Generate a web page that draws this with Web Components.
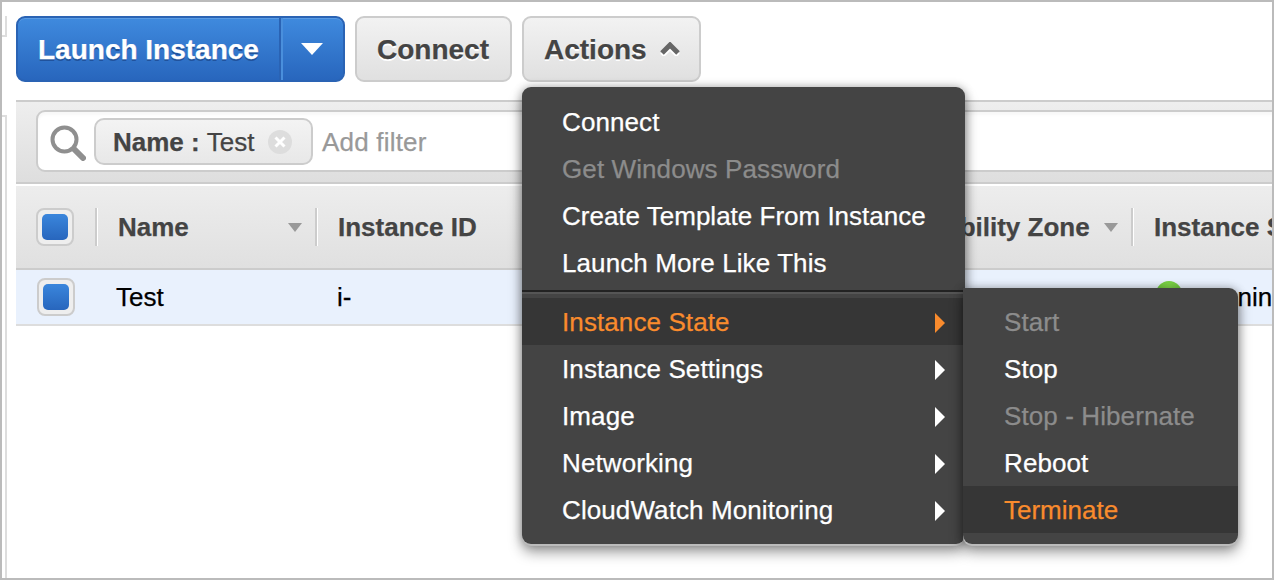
<!DOCTYPE html>
<html>
<head>
<meta charset="utf-8">
<title>Instances</title>
<style>
    html, body { margin: 0; padding: 0; background: #fff; }
    body { font-family: "Liberation Sans", Arial, sans-serif; }
</style>
</head>
<body>
<ec2-console>
    <ec2-toolbar>
        <launch-button>Launch Instance</launch-button>
        <gray-button style="width: 157px">Connect</gray-button>
        <actions-menu>
            <gray-button open style="width: 179px">Actions</gray-button>
            <dark-menu slot="menu" style="--menu-w: 443px">
                <menu-item>Connect</menu-item>
                <menu-item disabled>Get Windows Password</menu-item>
                <menu-item style="letter-spacing: 0">Create Template From Instance</menu-item>
                <menu-item>Launch More Like This</menu-item>
                <menu-divider></menu-divider>
                <menu-item active arrow>Instance State
                    <dark-menu slot="sub" style="--menu-w: 275px; --pad-l: 41px">
                        <menu-item disabled>Start</menu-item>
                        <menu-item>Stop</menu-item>
                        <menu-item disabled>Stop - Hibernate</menu-item>
                        <menu-item>Reboot</menu-item>
                        <menu-item active style="letter-spacing: 0">Terminate</menu-item>
                    </dark-menu>
                </menu-item>
                <menu-item arrow>Instance Settings</menu-item>
                <menu-item arrow>Image</menu-item>
                <menu-item arrow>Networking</menu-item>
                <menu-item arrow>CloudWatch Monitoring</menu-item>
            </dark-menu>
        </actions-menu>
    </ec2-toolbar>
    <filter-bar>
        <filter-chip>Test</filter-chip>
    </filter-bar>
    <instance-table></instance-table>
</ec2-console>

<script>
// shell with the grey screenshot frame
class Ec2Console extends HTMLElement {
    constructor() {
        super();
        this.attachShadow({mode: 'open'}).innerHTML = `
            <style>
                :host {
                    display: block;
                    box-sizing: border-box;
                    width: 1274px;
                    height: 580px;
                    border: 2px solid #bbb;
                    padding-left: 14px;
                    overflow: hidden;
                    color: #444;
                    font-family: "Liberation Sans", Arial, sans-serif;
                    font-size: 26px;
                    -webkit-text-stroke: .25px;
                    /* bits of the page behind, left of the content */
                    background:
                        linear-gradient(#ddd, #ddd) 3px 14px / 2px 20px no-repeat,
                        linear-gradient(#ddd, #ddd) 0 33px / 5px 2px no-repeat,
                        linear-gradient(#ddd, #ddd) 0 113px / 5px 2px no-repeat,
                        linear-gradient(#ddd, #ddd) 3px 113px / 2px 463px no-repeat,
                        #fff;
                }
            </style>
            <slot></slot>`;
    }
}

class Ec2Toolbar extends HTMLElement {
    constructor() {
        super();
        this.attachShadow({mode: 'open'}).innerHTML = `
            <style>
                :host {
                    display: flex;
                    gap: 10px;
                    padding-top: 14px;
                    height: 98px;
                    box-sizing: border-box;
                    position: relative;
                    z-index: 5;
                }
            </style>
            <slot></slot>`;
    }
}

class LaunchButton extends HTMLElement {
    constructor() {
        super();
        this.attachShadow({mode: 'open'}).innerHTML = `
            <style>
                :host {
                    display: flex;
                    box-sizing: border-box;
                    width: 329px;
                    height: 66px;
                    border: 2px solid #2a63b4;
                    border-radius: 9px;
                    background: linear-gradient(#3f8ade, #2866bd);
                    box-shadow: inset 0 1px 0 #5a9be3;
                    color: #fff;
                    font-size: 28px;
                    font-weight: bold;
                    text-shadow: 0 2px 0 #20529c;
                }
                .label { flex: 1; display: flex; align-items: center; padding: 2px 0 0 20px; }
                .caret {
                    width: 62px;
                    display: flex;
                    align-items: center;
                    justify-content: center;
                    border-left: 2px solid #2a63b4;
                    box-shadow: inset 2px 0 0 #4a8fdc;
                }
            </style>
            <div class="label"><slot></slot></div>
            <div class="caret"><svg width="22" height="12" viewBox="0 0 22 12"><path d="M0 0h22L11 12z" fill="#fff"/></svg></div>`;
    }
}

class GrayButton extends HTMLElement {
    constructor() {
        super();
        const open = this.hasAttribute('open');
        this.attachShadow({mode: 'open'}).innerHTML = `
            <style>
                :host {
                    display: flex;
                    align-items: center;
                    gap: 13px;
                    box-sizing: border-box;
                    height: 66px;
                    padding: 0 0 0 20px;
                    border: 2px solid #ccc;
                    border-radius: 9px;
                    background: linear-gradient(#f2f2f2, #e0e0e0);
                    font-size: 28px;
                    font-weight: bold;
                    color: #444;
                    text-shadow: 0 2px 0 #fff;
                }
                span { padding-top: 2px; }
                svg { display: block; }
            </style>
            <span><slot></slot></span>
            ${open ? `<svg width="20" height="14" viewBox="0 0 20 14">
                <path d="M2 12l8-8 8 8" fill="none" stroke="#fff" stroke-width="5" transform="translate(0 1.5)"/>
                <path d="M2 11l8-8 8 8" fill="none" stroke="#666" stroke-width="5"/>
            </svg>` : ''}`;
    }
}

class ActionsMenu extends HTMLElement {
    constructor() {
        super();
        this.attachShadow({mode: 'open'}).innerHTML = `
            <style>
                :host { display: block; position: relative; }
                .drop { position: absolute; left: 0; top: 71px; }
            </style>
            <slot></slot>
            <div class="drop"><slot name="menu"></slot></div>`;
    }
}

class DarkMenu extends HTMLElement {
    constructor() {
        super();
        this.attachShadow({mode: 'open'}).innerHTML = `
            <style>
                :host {
                    display: block;
                    box-sizing: border-box;
                    width: var(--menu-w);
                    padding: 12px 0 11px;
                    background: #444;
                    border-radius: 9px;
                    box-shadow: 0 2px 0 #bbb, 0 8px 14px rgba(0,0,0,.4), 0 0 10px rgba(0,0,0,.3);
                    font-size: 26px;
                    font-weight: normal;
                    text-shadow: none;
                    letter-spacing: .1px;
                }
                :host([slot="sub"]) {
                    position: absolute;
                    left: 441px;
                    top: -10px;
                    padding-top: 10px;
                    border-top-left-radius: 0;
                    --pad-t: 2px;
                }
            </style>
            <slot></slot>`;
    }
}

class MenuItem extends HTMLElement {
    constructor() {
        super();
        const arrow = this.hasAttribute('arrow');
        const color = this.hasAttribute('active') ? '#f98b2d' : '#fff';
        this.attachShadow({mode: 'open'}).innerHTML = `
            <style>
                :host {
                    display: flex;
                    align-items: center;
                    justify-content: space-between;
                    box-sizing: border-box;
                    position: relative;
                    height: 47px;
                    padding: var(--pad-t, 0) 20px 0 var(--pad-l, 40px);
                    color: #fff;
                }
                :host([arrow]) { padding-top: 2px; }
                :host([active]) { background: #363636; color: #f98b2d; }
                :host([disabled]) { color: #8c8c8c; }
            </style>
            <span><slot></slot></span>
            ${arrow ? `<svg width="10" height="20" viewBox="0 0 10 20"><path d="M0 0l10 10L0 20z" fill="${color}"/></svg>` : ''}
            <slot name="sub"></slot>`;
    }
}

class MenuDivider extends HTMLElement {
    constructor() {
        super();
        this.attachShadow({mode: 'open'}).innerHTML = `
            <style>
                :host {
                    display: block;
                    height: 2px;
                    margin: 3px 0 4px;
                    background: #222;
                    border-bottom: 2px solid #555;
                }
            </style>`;
    }
}

class FilterBar extends HTMLElement {
    constructor() {
        super();
        this.attachShadow({mode: 'open'}).innerHTML = `
            <style>
                :host {
                    display: block;
                    box-sizing: border-box;
                    height: 84px;
                    padding: 8px 0 10px 20px;
                    border-top: 2px solid #ccc;
                    border-bottom: 2px solid #ccc;
                    background: linear-gradient(#eee, #dedede);
                }
                .input {
                    display: flex;
                    align-items: center;
                    box-sizing: border-box;
                    height: 62px;
                    margin-right: -12px;
                    padding-left: 12px;
                    border: 2px solid #ccc;
                    border-radius: 9px;
                    background: #fff;
                    box-shadow: inset 0 3px 3px rgba(0,0,0,.03);
                }
                svg { display: block; margin: 3px 8px 0 0; }
                .add { margin-left: 9px; padding-top: 2px; color: #999; letter-spacing: .2px; }
            </style>
            <div class="input">
                <svg width="36" height="36" viewBox="0 0 36 36">
                    <circle cx="14.5" cy="14.5" r="12" fill="none" stroke="#8f8f8f" stroke-width="4"/>
                    <path d="M24 24l9 9" stroke="#8f8f8f" stroke-width="6" stroke-linecap="round"/>
                </svg>
                <slot></slot>
                <span class="add">Add filter</span>
            </div>`;
    }
}

class FilterChip extends HTMLElement {
    constructor() {
        super();
        this.attachShadow({mode: 'open'}).innerHTML = `
            <style>
                :host {
                    display: flex;
                    align-items: center;
                    box-sizing: border-box;
                    width: 219px;
                    height: 47px;
                    padding: 2px 0 0 17px;
                    border: 2px solid #ccc;
                    border-radius: 10px;
                    background: linear-gradient(#f3f3f3, #e8e8e8);
                    color: #444;
                }
                b { margin-right: 7px; }
                svg { display: block; margin-left: auto; margin-right: 19px; }
            </style>
            <b>Name :</b><slot></slot>
            <svg width="24" height="24" viewBox="0 0 24 24">
                <circle cx="12" cy="12" r="12" fill="#ddd"/>
                <path d="M7.5 7.5l9 9M16.5 7.5l-9 9" stroke="#fff" stroke-width="3"/>
            </svg>`;
    }
}

class BlueCheck extends HTMLElement {
    constructor() {
        super();
        this.attachShadow({mode: 'open'}).innerHTML = `
            <style>
                :host {
                    display: flex;
                    align-items: center;
                    justify-content: center;
                    box-sizing: border-box;
                    width: 38px;
                    height: 38px;
                    border: 2px solid #ccc;
                    border-radius: 8px;
                    background: #eee;
                }
                i {
                    display: block;
                    width: 26px;
                    height: 26px;
                    border-radius: 5px;
                    background: linear-gradient(#3a86dc, #2866bd);
                }
            </style>
            <i></i>`;
    }
}

class InstanceTable extends HTMLElement {
    constructor() {
        super();
        const arrow = `<svg width="14" height="9" viewBox="0 0 14 9"><path d="M0 0h14L7 9z" fill="#999"/></svg>`;
        this.attachShadow({mode: 'open'}).innerHTML = `
            <style>
                :host { display: block; margin-top: 2px; }
                .row { display: grid; grid-template-columns: 79px 220px 546px 270px 1fr; }
                .head {
                    height: 84px;
                    box-sizing: border-box;
                    border-bottom: 2px solid #ccc;
                    background: linear-gradient(#ededed, #e0e0e0);
                    font-weight: bold;
                    color: #444;
                }
                .body {
                    height: 56px;
                    box-sizing: border-box;
                    border-bottom: 2px solid #ddd;
                    background: #e9f1fd;
                    color: #000;
                }
                .cell {
                    display: flex;
                    align-items: center;
                    justify-content: space-between;
                    padding: 0 13px 0 23px;
                    white-space: nowrap;
                    overflow: hidden;
                }
                .body .cell { padding-left: 22px; }
                .head .cell { position: relative; }
                .head .cell + .cell::before {
                    content: "";
                    position: absolute;
                    left: 0;
                    top: 22px;
                    height: 38px;
                    width: 2px;
                    background: #ccc;
                    box-shadow: 1px 0 0 #fff;
                }
                .head .cb { padding: 0 0 0 20px; }
                .body .cb { padding: 0 0 0 21px; }
                .body .name { padding-left: 21px; }
                .body .zone { padding-left: 46px; }
                .body .status { justify-content: flex-start; gap: 18px; padding: 0 0 0 25px; overflow: visible; }
                .ball {
                    flex: none;
                    width: 26px;
                    height: 26px;
                    margin-top: -6px;
                    border-radius: 50%;
                    background: radial-gradient(circle at 50% 30%, #86dc4e, #5cba30);
                }
            </style>
            <div class="row head">
                <div class="cell cb"><blue-check></blue-check></div>
                <div class="cell">Name ${arrow}</div>
                <div class="cell">Instance ID</div>
                <div class="cell">Availability Zone ${arrow}</div>
                <div class="cell">Instance State</div>
            </div>
            <div class="row body">
                <div class="cell cb"><blue-check></blue-check></div>
                <div class="cell name">Test</div>
                <div class="cell">i-</div>
                <div class="cell zone">us-east-1a</div>
                <div class="cell status"><span class="ball"></span>running</div>
            </div>`;
    }
}

customElements.define('ec2-console', Ec2Console);
customElements.define('ec2-toolbar', Ec2Toolbar);
customElements.define('launch-button', LaunchButton);
customElements.define('gray-button', GrayButton);
customElements.define('actions-menu', ActionsMenu);
customElements.define('dark-menu', DarkMenu);
customElements.define('menu-item', MenuItem);
customElements.define('menu-divider', MenuDivider);
customElements.define('filter-bar', FilterBar);
customElements.define('filter-chip', FilterChip);
customElements.define('blue-check', BlueCheck);
customElements.define('instance-table', InstanceTable);
</script>
</body>
</html>
